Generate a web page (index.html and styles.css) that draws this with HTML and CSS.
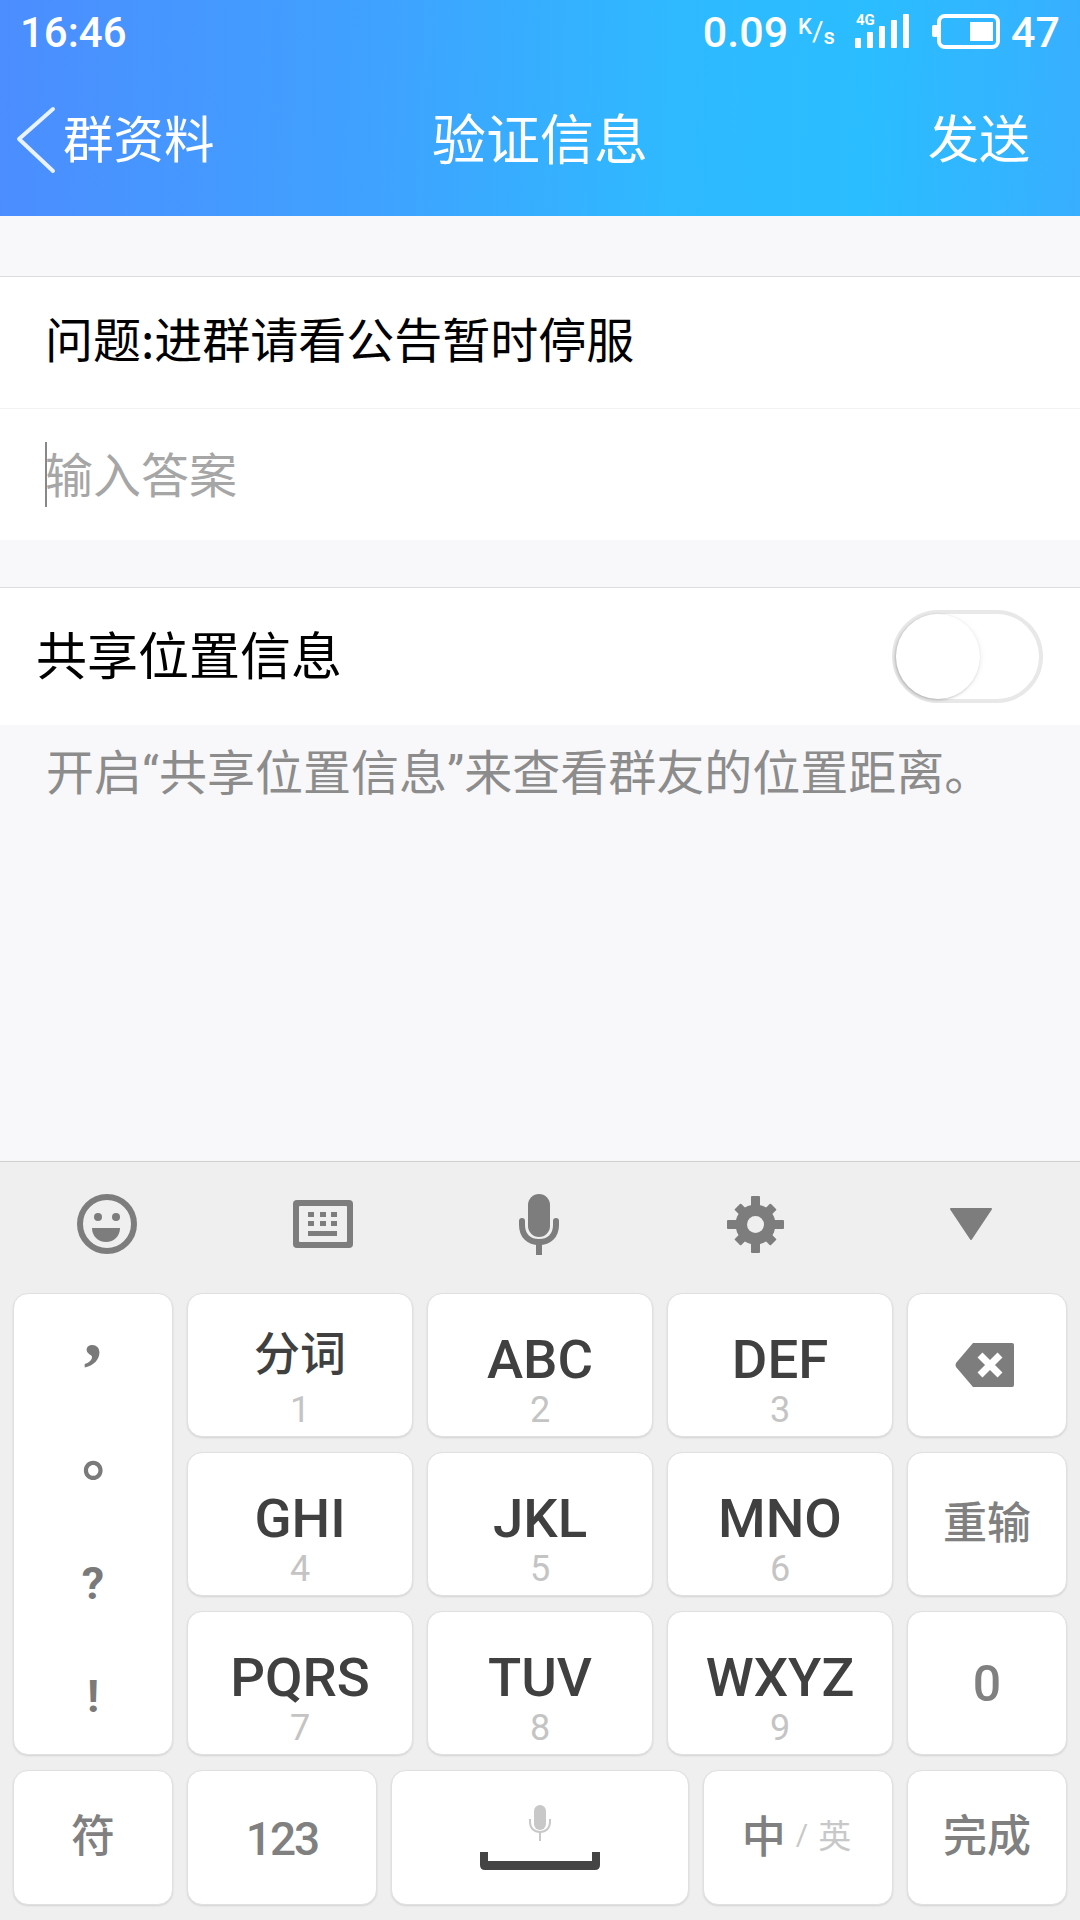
FILE: index.html
```html
<!DOCTYPE html>
<html lang="zh-CN">
<head>
  <meta charset="UTF-8" />
  <meta name="viewport" content="width=device-width, initial-scale=1" />
  <title>验证信息</title>
  <link rel="stylesheet" href="styles.css">
</head>
<body>
  <div class="topbar">
    <div class="status">
      <span class="clock">16:46</span>
      <div class="status-right">
        <span class="speed">0.09</span>
        <span class="speed-unit"><sup>K</sup>/<sub>s</sub></span>
        <svg class="signal" width="58" height="36" viewBox="0 0 58 36">
          <text x="2" y="11" class="signal-label">4G</text>
          <rect x="1" y="24" width="6" height="10" rx="1" />
          <rect x="13" y="18" width="6" height="16" rx="1" />
          <rect x="25" y="12" width="6" height="22" rx="1" />
          <rect x="37" y="6" width="6" height="28" rx="1" />
          <rect x="49" y="0" width="6" height="34" rx="1" />
        </svg>
        <svg class="battery" width="68" height="36" viewBox="0 0 68 36">
          <rect x="0" y="11" width="6" height="12" rx="2" fill="#fff" />
          <rect x="7" y="2" width="59" height="31" rx="6" fill="none" stroke="#fff" stroke-width="4" />
          <rect x="38" y="8" width="23" height="19" fill="#fff" />
        </svg>
        <span class="battery-num">47</span>
      </div>
    </div>
    <div class="nav">
      <div class="nav-back">
        <svg width="44" height="68" viewBox="0 0 44 68">
          <path d="M38 3 L4 33 L38 65" fill="none" stroke="#e9f3ff" stroke-width="4" stroke-linecap="round" stroke-linejoin="round" />
        </svg>
        <span>群资料</span>
      </div>
      <div class="nav-title">验证信息</div>
      <div class="nav-send">发送</div>
    </div>
  </div>

  <div class="content">
    <div class="form-group first">
      <div class="question">问题:进群请看公告暂时停服</div>
      <div class="answer"><i class="caret"></i><span>输入答案</span></div>
    </div>
    <div class="form-group">
      <div class="share-row">
        <span>共享位置信息</span>
        <div class="switch"><div class="knob"></div></div>
      </div>
    </div>
    <p class="hint">开启<span class="quote">“</span>共享位置信息<span class="quote">”</span>来查看群友的位置距离。</p>
  </div>

  <div class="keyboard">
    <div class="toolbar">
      <svg width="60" height="60" viewBox="0 0 60 60">
        <circle cx="30" cy="30" r="27" fill="none" stroke="#7d7d7d" stroke-width="6" />
        <circle cx="21" cy="23" r="4" fill="#7d7d7d" />
        <circle cx="39" cy="23" r="4" fill="#7d7d7d" />
        <path d="M15 34 H43 C43 42 37 48 29 48 C21 48 15 42 15 34 Z" fill="#7d7d7d" />
      </svg>
      <svg width="60" height="48" viewBox="0 0 60 48">
        <rect x="0" y="0" width="60" height="48" rx="4" fill="#7d7d7d" />
        <rect x="6" y="6" width="48" height="36" rx="1" fill="#efefef" />
        <path d="M15 12h6v5h-6zM27 12h6v5h-6zM38 12h6v5h-6zM15 21h6v5h-6zM27 21h6v5h-6zM38 21h6v5h-6zM15 31h29v5H15z" fill="#7d7d7d" />
      </svg>
      <svg width="40" height="61" viewBox="0 0 40 61">
        <rect x="9" y="0" width="22" height="43" rx="11" fill="#7d7d7d" />
        <path d="M3 27 V31 C3 42 10 48 20 48 C30 48 37 42 37 31 V27" fill="none" stroke="#7d7d7d" stroke-width="6" stroke-linecap="round" />
        <rect x="17" y="48" width="6" height="13" fill="#7d7d7d" />
      </svg>
      <svg width="57" height="57" viewBox="0 0 57 57">
        <circle cx="28.5" cy="28.5" r="20" fill="#7d7d7d" />
        <g fill="#7d7d7d">
          <rect x="24" y="0" width="9" height="57" rx="1" />
          <rect x="0" y="24" width="57" height="9" rx="1" />
          <rect x="24" y="3" width="9" height="51" rx="1" transform="rotate(45 28.5 28.5)" />
          <rect x="24" y="3" width="9" height="51" rx="1" transform="rotate(-45 28.5 28.5)" />
        </g>
        <circle cx="28.5" cy="28.5" r="8.5" fill="#efefef" />
      </svg>
      <svg width="44" height="32" viewBox="0 0 44 32">
        <path d="M2 1 H42 L22 31 Z" fill="#7d7d7d" stroke="#7d7d7d" stroke-width="2" stroke-linejoin="round" />
      </svg>
    </div>

    <div class="keys">
      <div class="key punct">
        <span class="punct-comma">,</span>
        <span class="punct-dot">。</span>
        <span class="punct-ask">?</span>
        <span>!</span>
      </div>
      <div class="key letter"><b class="cjk">分词</b><small>1</small></div>
      <div class="key letter"><b>ABC</b><small>2</small></div>
      <div class="key letter"><b>DEF</b><small>3</small></div>
      <div class="key icon-key">
        <svg class="backspace" width="59" height="46" viewBox="0 0 59 46">
          <path d="M18 1 H57 Q59 1 59 3 V43 Q59 45 57 45 H18 L1 25 Q0 23 1 21 Z" fill="#7d7d7d" />
          <path d="M25 13 L45 33 M45 13 L25 33" stroke="#fff" stroke-width="7" />
        </svg>
      </div>
      <div class="key letter"><b>GHI</b><small>4</small></div>
      <div class="key letter"><b>JKL</b><small>5</small></div>
      <div class="key letter"><b>MNO</b><small>6</small></div>
      <div class="key side">重输</div>
      <div class="key letter"><b>PQRS</b><small>7</small></div>
      <div class="key letter"><b>TUV</b><small>8</small></div>
      <div class="key letter"><b>WXYZ</b><small>9</small></div>
      <div class="key side zero">0</div>
    </div>

    <div class="bottom-row">
      <div class="key side w-side">符</div>
      <div class="key side num w-num">123</div>
      <div class="key space">
        <svg width="22" height="36" viewBox="0 0 22 36">
          <rect x="5" y="0" width="12" height="25" rx="6" fill="#c8c8c8" />
          <path d="M1 14 V17 C1 23 5 27 11 27 C17 27 21 23 21 17 V14" fill="none" stroke="#c8c8c8" stroke-width="2" />
          <rect x="10" y="26" width="2" height="10" fill="#c8c8c8" />
        </svg>
        <svg width="120" height="18" viewBox="0 0 120 18">
          <path d="M0 0 H8 V9 H112 V0 H120 V13 Q120 18 115 18 H5 Q0 18 0 13 Z" fill="#444" />
        </svg>
      </div>
      <div class="key lang w-num"><span class="lang-on">中</span><span class="lang-slash">/</span><span class="lang-off">英</span></div>
      <div class="key side w-side">完成</div>
    </div>
  </div>
</body>
</html>
```

FILE: styles.css
```css
* {
  box-sizing: border-box;
}

html,
body {
  margin: 0;
  height: 1920px;
}

body {
  width: 1080px;
  display: flex;
  flex-direction: column;
  overflow: hidden;
  background: #f8f8fa;
  font-family: "Noto Sans CJK SC", "Noto Sans", sans-serif;
}

/* blue header */
.topbar {
  height: 216px;
  color: #fff;
  background: linear-gradient(92deg, #4c8dff 0%, #3fa2ff 35%, #2fb9ff 62%, #2abdff 80%, #38afff 100%);
}

.status {
  height: 64px;
  padding: 0 20px 0 20px;
  display: flex;
  justify-content: space-between;
  align-items: center;
  font-family: Roboto, sans-serif;
}

.clock {
  font-size: 42px;
  font-weight: 500;
}

.status-right {
  display: flex;
  align-items: center;
}

.speed,
.battery-num {
  flex-shrink: 0;
  font-size: 43px;
  font-weight: 500;
  line-height: 52px;
}

.speed-unit {
  flex-shrink: 0;
  width: 40px;
  margin: 0 16px 0 10px;
  font-size: 28px;
  white-space: nowrap;
  line-height: 36px;
}

.speed-unit sup,
.speed-unit sub {
  font-size: 22px;
  font-weight: 500;
  line-height: 0;
}

.speed-unit sup {
  vertical-align: 7px;
}

.speed-unit sub {
  vertical-align: -3px;
}

.signal {
  margin-right: 20px;
  fill: #fff;
}

.signal-label {
  font-family: Roboto, sans-serif;
  font-size: 15px;
  font-weight: 700;
}

.battery {
  margin-right: 11px;
}

.nav {
  height: 152px;
  padding: 0 50px 8px 15px;
  display: flex;
  justify-content: space-between;
  align-items: center;
  position: relative;
  font-size: 50.5px;
}

.nav-back {
  display: flex;
  align-items: center;
}

.nav-back svg {
  margin: 8px 4px 0 0;
}

.nav-title {
  position: absolute;
  left: 0;
  right: 0;
  text-align: center;
  font-size: 54px;
}

.nav-send {
  font-size: 51px;
}

/* form */
.content {
  flex: 1;
}

.form-group {
  background: #fff;
  border-top: 1px solid #dddde0;
  margin-top: 47px;
}

.form-group.first {
  margin-top: 60px;
}

.question,
.answer {
  height: 131px;
  display: flex;
  align-items: center;
  padding-left: 45px;
  font-size: 48px;
  color: #000;
}

.question {
  height: 132px;
  padding-bottom: 12px;
  border-bottom: 1px solid #f2f2f4;
}

.answer {
  color: #a6a6a6;
}

.answer span {
  margin: 0 0 6px -2px;
}

.caret {
  width: 2px;
  height: 65px;
  background: #888;
}

.share-row {
  height: 137px;
  padding: 0 37px 0 36px;
  display: flex;
  justify-content: space-between;
  align-items: center;
  font-size: 51px;
  color: #000;
}

.share-row span {
  margin-bottom: 8px;
}

.switch {
  width: 151px;
  height: 93px;
  border: 4px solid #e8e8e8;
  border-radius: 47px;
  background: #fff;
}

.knob {
  width: 84px;
  height: 85px;
  border-radius: 50%;
  background: #fff;
  box-shadow: -1px 1px 3px rgba(0, 0, 0, 0.24), 3px 0 4px rgba(0, 0, 0, 0.03);
}

.hint {
  margin: 0;
  padding: 9px 0 0 46px;
  font-size: 48px;
  line-height: 70px;
  color: #8c8c8c;
}

.quote {
  font-family: Roboto, sans-serif;
}

/* keyboard */
.keyboard {
  height: 759px;
  padding: 0 13px;
  background: #efefef;
  border-top: 1px solid #cfcfcf;
}

.toolbar {
  height: 131px;
  margin-left: -14px;
  padding-bottom: 7px;
  display: grid;
  grid-template-columns: repeat(5, 216px);
  justify-items: center;
  align-items: center;
}

.keys {
  display: grid;
  grid-template-columns: 160px 226px 226px 226px 160px;
  grid-auto-rows: 144px;
  gap: 15px 14px;
}

.key {
  background: #fff;
  border-radius: 15px;
  border: 1px solid #e0e0e0;
  box-shadow: 0 1px 2px rgba(0, 0, 0, 0.12);
  display: flex;
  align-items: center;
  justify-content: center;
}

.punct {
  grid-row: span 3;
  flex-direction: column;
  align-items: stretch;
  font-family: Roboto, sans-serif;
  font-weight: 700;
  font-size: 45px;
  color: #7a7a7a;
}

.punct span {
  flex: 1;
  display: flex;
  align-items: center;
  justify-content: center;
}

.punct-comma {
  font-size: 74px;
  font-family: "Liberation Serif", serif;
  transform: translateY(-20px);
}

.punct-dot {
  font-family: "Noto Sans CJK SC", sans-serif;
  font-size: 58px;
  transform: translate(18px, -17px);
}

.punct-ask {
  transform: translateY(2px);
}

.letter {
  padding-top: 26px;
  flex-direction: column;
  color: #404040;
}

.letter b {
  font-family: Roboto, sans-serif;
  font-weight: 500;
  font-size: 54.5px;
  line-height: 62px;
  transform: translateY(2px);
}

.letter b.cjk {
  font-family: "Noto Sans CJK SC", sans-serif;
  font-size: 46px;
  transform: translateY(-7px);
}

.letter small {
  font-family: Roboto, sans-serif;
  font-size: 36px;
  line-height: 40px;
  color: #c4c4c4;
  margin-top: 2px;
}

.backspace {
  margin-right: 5px;
}

.side {
  padding-bottom: 9px;
  color: #808080;
  font-size: 44px;
  font-weight: 500;
}

.zero,
.num {
  padding: 2px 0 0;
  font-family: Roboto, sans-serif;
  font-size: 50px;
}

.num {
  font-size: 46px;
  letter-spacing: -2px;
}

.bottom-row {
  margin-top: 15px;
  height: 135px;
  display: flex;
  gap: 14px;
}

.w-side {
  width: 160px;
}

.w-num {
  width: 190px;
}

.space {
  width: 298px;
  flex-direction: column;
  gap: 11px;
}

.lang {
  gap: 10px;
  align-items: center;
  padding: 0 3px 7px 0;
}

.lang-on {
  font-size: 44px;
  font-weight: 500;
  color: #808080;
}

.lang-slash {
  font-family: Roboto, sans-serif;
  font-size: 30px;
  color: #c8c8c8;
}

.lang-off {
  font-size: 33px;
  color: #c8c8c8;
}
```
